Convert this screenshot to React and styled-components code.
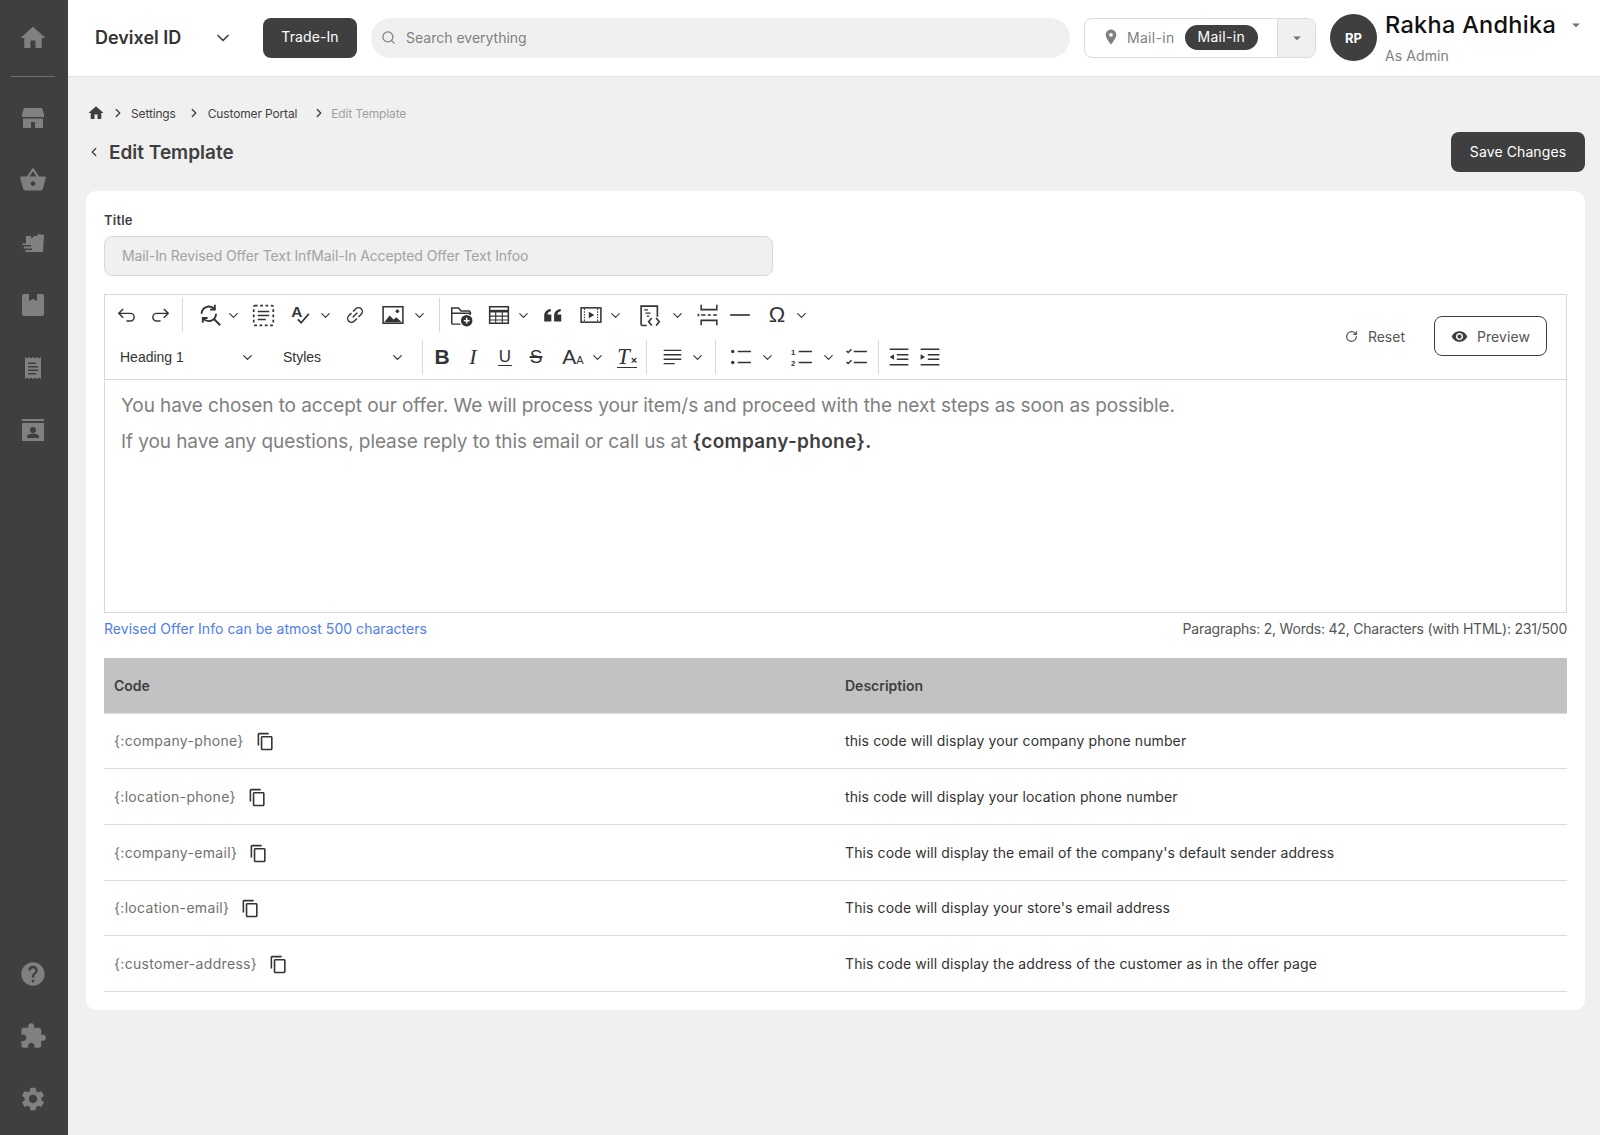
import React from 'react';
import styled, { createGlobalStyle } from 'styled-components';
import { ChevronDown, ChevronLeft, ChevronRight, RotateCw, Search } from 'lucide-react';
import {
  MdArrowDropDown,
  MdContentCopy,
  MdExtension,
  MdHelp,
  MdHome,
  MdPlace,
  MdSettings,
  MdShoppingBasket,
  MdVisibility,
} from 'react-icons/md';

const GlobalStyle = createGlobalStyle`
  html, body {
    margin: 0;
    padding: 0;
    background: #f0f0f0;
    font-family: Inter, "Noto Sans", sans-serif;
    color: #3f3f3f;
  }
  * { box-sizing: border-box; }
`;

const Page = styled.div`
  display: flex;
  width: 1600px;
  height: 1135px;
  overflow: hidden;
`;

const Sidebar = styled.aside`
  width: 68px;
  flex-shrink: 0;
  background: #3f3f3f;
  display: flex;
  flex-direction: column;
  padding: 7px 2px 5px 0;
  color: #808080;
`;

const SideSlot = styled.div`
  height: 62.5px;
  display: flex;
  align-items: center;
  justify-content: center;
`;

const SideDivider = styled.hr`
  width: 44px;
  height: 1px;
  border: 0;
  margin: 6px auto 10px;
  background: #707070;
`;

const SideBottom = styled.div`
  margin-top: auto;
`;

const Main = styled.div`
  flex: 1;
  min-width: 0;
  display: flex;
  flex-direction: column;
`;

const TopBar = styled.header`
  height: 77px;
  background: #fff;
  border-bottom: 1px solid #e2e2e2;
  display: flex;
  align-items: center;
  padding: 0 15px 1px 27px;
`;

const Brand = styled.div`
  width: 118px;
  font-size: 18px;
  font-weight: 600;
  color: #333;
`;

const BrandChevron = styled(ChevronDown)`
  width: 20px;
  height: 20px;
  margin-right: 30px;
  color: #3f3f3f;
`;

const DarkButton = styled.button`
  width: ${(p) => p.$w}px;
  height: 40px;
  padding: 0 0 2px;
  background: #3f3f3f;
  color: #fff;
  border: 0;
  border-radius: 8px;
  font: 400 14px Inter, sans-serif;
  letter-spacing: 0.1px;
`;

const SearchBox = styled.div`
  width: 699px;
  height: 40px;
  margin: 0 14px;
  padding: 0 10px 1px;
  border-radius: 20px;
  background: #f0f0f0;
  display: flex;
  align-items: center;
  gap: 10px;
  color: #808080;
  font-size: 14px;
`;

const ModeBox = styled.div`
  width: 232px;
  height: 40px;
  border: 1px solid #dcdcdc;
  border-radius: 8px;
  display: flex;
  align-items: center;
  overflow: hidden;
`;

const ModeMain = styled.div`
  flex: 1;
  height: 100%;
  padding: 0 0 1px 17px;
  display: flex;
  align-items: center;
  gap: 7px;
  font-size: 14px;
  letter-spacing: 0.3px;
  color: #808080;
`;

const ModePill = styled.span`
  height: 25px;
  padding: 0 13px 1px;
  margin-left: 3px;
  border-radius: 13px;
  background: #3f3f3f;
  color: #fff;
  display: flex;
  align-items: center;
`;

const ModeCaret = styled.div`
  width: 38px;
  height: 100%;
  background: #f0f0f0;
  border-left: 1px solid #dcdcdc;
  display: flex;
  align-items: center;
  justify-content: center;
  color: #707070;
`;

const Avatar = styled.div`
  width: 47px;
  height: 47px;
  margin-left: 14px;
  border-radius: 50%;
  background: #3f3f3f;
  color: #fff;
  font-size: 13px;
  font-weight: 700;
  display: flex;
  align-items: center;
  justify-content: center;
`;

const UserBlock = styled.div`
  margin-left: 8px;
  flex: 1;
  display: flex;
  flex-direction: column;
  gap: 9px;
  padding-top: 2px;
`;

const UserName = styled.div`
  display: flex;
  align-items: center;
  justify-content: space-between;
  font-size: 23.5px;
  line-height: 26px;
  font-weight: 500;
  color: #111;
  letter-spacing: 0.3px;
`;

const UserRole = styled.div`
  font-size: 14px;
  line-height: 18px;
  color: #808080;
  letter-spacing: 0.1px;
`;

const Content = styled.main`
  padding: 27px 15px 0 18px;
`;

const Crumbs = styled.nav`
  display: flex;
  align-items: center;
  height: 18px;
  padding-left: 1px;
  font-size: 12px;
  letter-spacing: -0.15px;
  color: #3f3f3f;
`;

const Crumb = styled.span`
  color: ${(p) => (p.$muted ? '#a0a0a0' : '#3f3f3f')};
`;

const CrumbArrow = styled(ChevronRight)`
  width: 14px;
  height: 14px;
  margin: 0 ${(p) => p.$r}px 0 ${(p) => p.$l}px;
  stroke-width: 2.2;
`;

const HeadRow = styled.div`
  display: flex;
  align-items: center;
  justify-content: space-between;
  height: 40px;
  margin-top: 10px;
`;

const PageTitle = styled.h1`
  display: flex;
  align-items: center;
  gap: 8px;
  margin: 0;
  font-size: 19px;
  font-weight: 600;
  color: #3f3f3f;
`;

const BackChevron = styled(ChevronLeft)`
  width: 14px;
  height: 14px;
  margin-left: 1px;
  stroke-width: 2.2;
`;

const Card = styled.section`
  margin-top: 19px;
  height: 819px;
  padding: 19px 18px;
  background: #fff;
  border-radius: 10px;
`;

const FieldLabel = styled.label`
  display: block;
  height: 19px;
  margin-top: 1px;
  font-size: 13px;
  line-height: 19px;
  font-weight: 600;
  letter-spacing: 0.2px;
  color: #3f3f3f;
`;

const TitleInput = styled.div`
  width: 669px;
  height: 40px;
  margin-top: 6px;
  padding: 0 17px 2px;
  border: 1px solid #d8d8d8;
  border-radius: 8px;
  background: #f0f0f0;
  display: flex;
  align-items: center;
  font-size: 14px;
  letter-spacing: -0.11px;
  color: #a2a2a2;
`;

const Editor = styled.div`
  height: 319px;
  margin-top: 18px;
  border: 1px solid #d8d8d8;
  display: flex;
  flex-direction: column;
`;

const Toolbar = styled.div`
  height: 85px;
  flex-shrink: 0;
  border-bottom: 1px solid #d8d8d8;
  display: flex;
  align-items: center;
  justify-content: space-between;
  padding: 0 19px 2px 0;
`;

const ToolRows = styled.div`
  display: flex;
  flex-direction: column;
  gap: 8px;
`;

const ToolRow = styled.div`
  display: flex;
  align-items: center;
  height: 34px;
  padding-left: 14px;
`;

// 16px slot, the icon may hang over its edges; $gap is the space before it
const ToolSlot = styled.span`
  width: 16px;
  height: 34px;
  flex-shrink: 0;
  margin-left: ${(p) => p.$gap || 0}px;
  display: flex;
  align-items: center;
  justify-content: center;
  color: #333;
  svg { flex-shrink: 0; overflow: visible; }
`;

const ToolDivider = styled.i`
  width: 1px;
  height: 34px;
  background: #d8d8d8;
`;

const ToolSelect = styled.div`
  width: ${(p) => p.$w}px;
  height: 34px;
  padding-left: ${(p) => p.$pl}px;
  padding-right: ${(p) => p.$pr}px;
  display: flex;
  align-items: center;
  justify-content: space-between;
  font: 400 14px "Liberation Sans", Arial, sans-serif;
  color: #333;
`;

const GlyphBold = styled.span`
  font: 700 21px "Liberation Sans", Arial, sans-serif;
`;

const GlyphItalic = styled.span`
  font: italic 400 22px "Liberation Serif", serif;
`;

const GlyphUnder = styled.span`
  font: 400 17px "Liberation Sans", Arial, sans-serif;
  padding: 0 1px;
  border-bottom: 1.5px solid #333;
  line-height: 17px;
`;

const GlyphStrike = styled.span`
  font: 400 19px "Liberation Sans", Arial, sans-serif;
  text-decoration: line-through;
  text-decoration-thickness: 1.5px;
`;

const GlyphSize = styled.span`
  font: 400 21px "Liberation Sans", Arial, sans-serif;
  white-space: nowrap;
  small { font-size: 11px; }
`;

const GlyphClear = styled.span`
  font: italic 400 23px "Liberation Serif", serif;
  white-space: nowrap;
  border-bottom: 1.5px solid #333;
  line-height: 20px;
  small {
    font: 700 11px "Liberation Sans", sans-serif;
    margin-left: 1px;
  }
`;

const GlyphOmega = styled.span`
  font: 400 22px "Liberation Sans", Arial, sans-serif;
`;

const ToolActions = styled.div`
  display: flex;
  align-items: center;
  gap: 29px;
`;

const ResetLink = styled.span`
  display: flex;
  align-items: center;
  gap: 10px;
  font-size: 14px;
  color: #555;
`;

const PreviewButton = styled.button`
  width: 113px;
  height: 40px;
  background: #fff;
  border: 1px solid #3f3f3f;
  border-radius: 8px;
  display: flex;
  align-items: center;
  justify-content: center;
  gap: 9px;
  font: 400 14px Inter, sans-serif;
  letter-spacing: 0.1px;
  color: #555;
`;

const EditorBody = styled.div`
  padding: 8px 16px;
  font-size: 19px;
  line-height: 36px;
  letter-spacing: -0.08px;
  color: #808080;
  p { margin: 0; }
  strong {
    color: #3f3f3f;
    font-weight: 600;
    letter-spacing: 0.3px;
  }
`;

const EditorFoot = styled.div`
  display: flex;
  justify-content: space-between;
  align-items: center;
  height: 30px;
  font-size: 14px;
  letter-spacing: -0.22px;
  color: #555;
`;

const Hint = styled.span`
  color: #4f7df0;
  letter-spacing: 0.04px;
`;

const CodeTable = styled.table`
  width: 100%;
  margin-top: 15px;
  border-collapse: collapse;
  table-layout: fixed;
  font-size: 14px;
`;

const HeadCell = styled.th`
  height: 55px;
  width: ${(p) => p.$w || 'auto'};
  padding: 0 10px;
  background: #c2c2c2;
  border-bottom: 1px solid #dcdcdc;
  text-align: left;
  font-weight: 600;
  color: #3f3f3f;
`;

const Cell = styled.td`
  height: 55.7px;
  padding: 0 10px;
  border-bottom: 1px solid #dcdcdc;
  color: #333;
  letter-spacing: 0.11px;
`;

const CodeCell = styled(Cell)`
  padding-top: 2px;
  color: #707070;
  letter-spacing: 0.32px;
`;

const CopyIcon = styled(MdContentCopy)`
  width: 19px;
  height: 19px;
  margin-left: 12px;
  color: #333;
  vertical-align: -5px;
`;

// toolbar drawings on a 20x20 grid
const Draw = ({ children, size = 22, sw = 1.3 }) => (
  <svg width={size} height={size} viewBox="0 0 20 20" fill="none" stroke="currentColor" strokeWidth={sw}>
    {children}
  </svg>
);

const Undo = () => (
  <Draw><path d="M6.500 4.500 2.500 8.500l4 4M2.500 8.500H13a3.500 3.500 0 0 1 0 7H9.500" /></Draw>
);
const Redo = () => (
  <Draw><path d="m13.500 4.500 4 4-4 4M17.500 8.500H7a3.500 3.500 0 0 0 0 7h3.500" /></Draw>
);
const FindReplace = () => (
  <Draw size={24} sw={1.6}>
    <path d="M3 9a6 6 0 0 1 10.500-4M15 9a6 6 0 0 1-10.500 4" />
    <path d="M14 1.500V5.500h-4M4 16.500V12.500h4M13.500 13.500l5 5" />
  </Draw>
);
const SelectAll = () => (
  <Draw size={23}>
    <rect x="1.500" y="1.500" width="17" height="17" rx="1" strokeDasharray="2.400 2.200" strokeWidth="1.500" />
    <path d="M5 6.500h10M5 10h10M5 13.500h7" />
  </Draw>
);
const Spell = () => (
  <Draw>
    <path d="m8 14 3 3 7-8" strokeWidth="1.500" />
    <text x="2" y="12" fontSize="14" fontWeight="700" fontFamily="Liberation Sans" fill="currentColor" stroke="none">A</text>
  </Draw>
);
const LinkIcon = () => (
  <Draw>
    <g transform="rotate(-45 10 10)">
      <path d="M9 6.500H5.500a3.500 3.500 0 0 0 0 7H9M11 6.500h3.500a3.500 3.500 0 0 1 0 7H11M7 10h6" />
    </g>
  </Draw>
);
const ImageIcon = () => (
  <Draw>
    <rect x="1" y="2.500" width="18" height="15" strokeWidth="1.400" />
    <path d="m2 16.500 5-6 3.500 3.500 2.500-2 5 4.500z" fill="currentColor" stroke="none" />
    <circle cx="14" cy="6.500" r="1.600" fill="currentColor" stroke="none" />
  </Draw>
);
const FolderAdd = () => (
  <Draw size={23}>
    <path d="M9 17.500H2.500a1 1 0 0 1-1-1V3.500h6l2 2.500h7a1 1 0 0 1 1 1v2.500M1.500 8h17" />
    <circle cx="14.500" cy="14.500" r="5" fill="currentColor" stroke="none" />
    <path d="M14.500 12v5M12 14.500h5" stroke="#fff" strokeWidth="1.300" />
  </Draw>
);
const TableIcon = () => (
  <Draw>
    <rect x="1.500" y="2.500" width="17" height="15" strokeWidth="1.400" />
    <path d="M1.500 6.500h17" strokeWidth="2.400" />
    <path d="M1.500 11h17M1.500 14.500h17M7 6v11.500M13 6v11.500" strokeWidth="1" />
  </Draw>
);
const QuoteIcon = () => (
  <Draw>
    <path
      d="M2 16V10.500C2 7.500 4 5 8 4.500v2c-2 .5-3 1.500-3 3h3.500V16zM11 16V10.500c0-3 2-5.500 6-6v2c-2 .5-3 1.500-3 3h3.500V16z"
      fill="currentColor"
      stroke="none"
    />
  </Draw>
);
const MediaIcon = () => (
  <Draw>
    <rect x="1" y="3.500" width="18" height="13" strokeWidth="1.400" />
    <path d="M4 4v12M16 4v12" strokeWidth="1" strokeDasharray="1.500 1" />
    <path d="m8 7 5 3-5 3z" fill="currentColor" stroke="none" />
  </Draw>
);
const SnippetIcon = () => (
  <Draw size={25}>
    <path d="M7 18H3.500a1 1 0 0 1-1-1V2.500h13V11" />
    <path d="M5 5.500h3M6 8h4M7 10.500h2" strokeWidth="1" />
    <path d="m11 12-2.500 3 2.500 3M14.500 12l2.500 3-2.500 3" />
  </Draw>
);
const PageBreak = () => (
  <Draw size={24}>
    <path d="M3.500 1.500v4h13v-4M3.500 18.500v-4h13v4" />
    <path d="M3.500 10h3.500M9 10h2.500M13.500 10h3" />
    <path d="M.5 8.500 2.500 10l-2 1.500z" fill="currentColor" stroke="none" />
  </Draw>
);
const HrIcon = () => (
  <Draw><path d="M1 10h18" strokeWidth="1.500" /></Draw>
);
const AlignIcon = () => (
  <Draw><path d="M1.500 4h16M1.500 8h16M1.500 12h16M1.500 16h10" /></Draw>
);
const BulletList = () => (
  <Draw>
    <circle cx="2.500" cy="5" r="1.500" fill="currentColor" stroke="none" />
    <circle cx="2.500" cy="15" r="1.500" fill="currentColor" stroke="none" />
    <path d="M7 5h12M7 15h12" />
  </Draw>
);
const NumberList = () => (
  <Draw>
    <text x="0" y="8" fontSize="7" fontWeight="700" fontFamily="Liberation Sans" fill="currentColor" stroke="none">1</text>
    <text x="0" y="18.500" fontSize="7" fontWeight="700" fontFamily="Liberation Sans" fill="currentColor" stroke="none">2</text>
    <path d="M7 5h12M7 15h12" />
  </Draw>
);
const TodoList = () => (
  <Draw>
    <path d="m.5 4.500 1.500 1.500 3-3M.5 14.500l1.500 1.500 3-3" />
    <path d="M7 5h12M7 15h12" />
  </Draw>
);
const Outdent = () => (
  <Draw>
    <path d="M1.500 3h17M8 8h10.500M8 12h10.500M1.500 17h17" />
    <path d="M5.500 7.500v5L1.500 10z" fill="currentColor" stroke="none" />
  </Draw>
);
const Indent = () => (
  <Draw>
    <path d="M1.500 3h17M8 8h10.500M8 12h10.500M1.500 17h17" />
    <path d="M1.500 7.500v5l4-2.500z" fill="currentColor" stroke="none" />
  </Draw>
);

const Chev = () => <ChevronDown size={15} strokeWidth={1.8} />;

const topTools = [
  [<Undo />, 0],
  [<Redo />, 17],
  [<ToolDivider />, 6.5],
  [<FindReplace />, 11.5],
  [<Chev />, 7],
  [<SelectAll />, 14],
  [<Spell />, 21],
  [<Chev />, 9],
  [<LinkIcon />, 14],
  [<ImageIcon />, 22],
  [<Chev />, 10],
  [<ToolDivider />, 4.5],
  [<FolderAdd />, 5.5],
  [<TableIcon />, 22],
  [<Chev />, 8],
  [<QuoteIcon />, 14],
  [<MediaIcon />, 22],
  [<Chev />, 8],
  [<SnippetIcon />, 19],
  [<Chev />, 11],
  [<PageBreak />, 16],
  [<HrIcon />, 15],
  [<GlyphOmega>Ω</GlyphOmega>, 21],
  [<Chev />, 8],
];

const formatTools = [
  [<ToolDivider />, 3],
  [<GlyphBold>B</GlyphBold>, 4],
  [<GlyphItalic>I</GlyphItalic>, 15],
  [<GlyphUnder>U</GlyphUnder>, 16],
  [<GlyphStrike>S</GlyphStrike>, 15],
  [<GlyphSize>A<small>A</small></GlyphSize>, 21],
  [<Chev />, 8],
  [<GlyphClear>T<small>×</small></GlyphClear>, 14],
  [<ToolDivider />, 3],
  [<AlignIcon />, 11],
  [<Chev />, 8],
  [<ToolDivider />, 2],
  [<BulletList />, 10],
  [<Chev />, 10],
  [<NumberList />, 19],
  [<Chev />, 10],
  [<TodoList />, 13],
  [<ToolDivider />, 5],
  [<Outdent />, 5],
  [<Indent />, 15],
];

const codes = [
  ['{:company-phone}', 'this code will display your company phone number'],
  ['{:location-phone}', 'this code will display your location phone number'],
  ['{:company-email}', "This code will display the email of the company's default sender address"],
  ['{:location-email}', "This code will display your store's email address"],
  ['{:customer-address}', 'This code will display the address of the customer as in the offer page'],
];

const StoreIcon = () => (
  <svg width="24" height="24" viewBox="0 0 24 24" fill="currentColor">
    <path fillRule="evenodd" d="M3 2h18l2 6v3H1V8zM2 12.500h20V22H14v-6h-4v6H2z" />
  </svg>
);
const ShippingIcon = () => (
  <svg width="24" height="24" viewBox="0 0 24 24" fill="currentColor">
    <path d="M5 5h5l.5 3L13 5h3l1-2 6 1-1 17H4l1-2h6v-1.500H2.500l.5-2h7V14H1l.5-1.500H5z" />
  </svg>
);
const BoxIcon = () => (
  <svg width="24" height="24" viewBox="0 0 24 24" fill="currentColor">
    <path d="M1 3a2 2 0 0 1 2-2h5v7l4-2 4 2V1h5a2 2 0 0 1 2 2v18a2 2 0 0 1-2 2H3a2 2 0 0 1-2-2z" />
  </svg>
);
const ReceiptIcon = () => (
  <svg width="24" height="24" viewBox="0 0 24 24" fill="currentColor">
    <path
      fillRule="evenodd"
      d="M4 1l2 1.500L8 1l2 1.500L12 1l2 1.500L16 1l2 1.500L20 1v22l-2-1.500-2 1.500-2-1.500-2 1.500-2-1.500L8 23l-2-1.500L4 23zM7 6.500v1.500h8V6.500zM7 10v1.500h10V10zM7 13.500V15h10v-1.500zM7 17v1.500h8V17z"
    />
  </svg>
);
const ContactIcon = () => (
  <svg width="24" height="24" viewBox="0 0 24 24" fill="currentColor">
    <path
      fillRule="evenodd"
      d="M1 1h22v2H1zM1 5h22v18H1zM12 9a3 3 0 1 0 0 6 3 3 0 0 0 0-6zM6 20h12v-1.500c0-2-4-3-6-3s-6 1-6 3z"
    />
  </svg>
);

const App = () => {
  return (
    <Page>
      <GlobalStyle />
      <Sidebar>
        <SideSlot><MdHome size={30} /></SideSlot>
        <SideDivider />
        <SideSlot><StoreIcon /></SideSlot>
        <SideSlot><MdShoppingBasket size={28} /></SideSlot>
        <SideSlot><ShippingIcon /></SideSlot>
        <SideSlot><BoxIcon /></SideSlot>
        <SideSlot><ReceiptIcon /></SideSlot>
        <SideSlot><ContactIcon /></SideSlot>
        <SideBottom>
          <SideSlot><MdHelp size={28} /></SideSlot>
          <SideSlot><MdExtension size={28} /></SideSlot>
          <SideSlot><MdSettings size={28} /></SideSlot>
        </SideBottom>
      </Sidebar>
      <Main>
        <TopBar>
          <Brand>Devixel ID</Brand>
          <BrandChevron />
          <DarkButton $w={94}>Trade-In</DarkButton>
          <SearchBox>
            <Search size={15} />
            Search everything
          </SearchBox>
          <ModeBox>
            <ModeMain>
              <MdPlace size={18} />
              Mail-in
              <ModePill>Mail-in</ModePill>
            </ModeMain>
            <ModeCaret><MdArrowDropDown size={18} /></ModeCaret>
          </ModeBox>
          <Avatar>RP</Avatar>
          <UserBlock>
            <UserName>
              Rakha Andhika
              <MdArrowDropDown size={18} color="#707070" />
            </UserName>
            <UserRole>As Admin</UserRole>
          </UserBlock>
        </TopBar>
        <Content>
          <Crumbs>
            <MdHome size={18} />
            <CrumbArrow $l={6} $r={6} />
            <Crumb>Settings</Crumb>
            <CrumbArrow $l={11} $r={7} />
            <Crumb>Customer Portal</Crumb>
            <CrumbArrow $l={15} $r={5} />
            <Crumb $muted>Edit Template</Crumb>
          </Crumbs>
          <HeadRow>
            <PageTitle>
              <BackChevron />
              Edit Template
            </PageTitle>
            <DarkButton $w={134}>Save Changes</DarkButton>
          </HeadRow>
          <Card>
            <FieldLabel>Title</FieldLabel>
            <TitleInput>Mail-In Revised Offer Text InfMail-In Accepted Offer Text Infoo</TitleInput>
            <Editor>
              <Toolbar>
                <ToolRows>
                  <ToolRow>
                    {topTools.map(([icon, gap], i) => (
                      <ToolSlot key={i} $gap={gap}>{icon}</ToolSlot>
                    ))}
                  </ToolRow>
                  <ToolRow>
                    <ToolSelect $w={156} $pl={1} $pr={20}>Heading 1<ChevronDown size={15} /></ToolSelect>
                    <ToolSelect $w={136} $pl={8} $pr={6.5}>Styles<ChevronDown size={15} /></ToolSelect>
                    {formatTools.map(([icon, gap], i) => (
                      <ToolSlot key={i} $gap={gap}>{icon}</ToolSlot>
                    ))}
                  </ToolRow>
                </ToolRows>
                <ToolActions>
                  <ResetLink><RotateCw size={13} strokeWidth={2.2} />Reset</ResetLink>
                  <PreviewButton><MdVisibility size={17} color="#3f3f3f" />Preview</PreviewButton>
                </ToolActions>
              </Toolbar>
              <EditorBody>
                <p>You have chosen to accept our offer. We will process your item/s and proceed with the next steps as soon as possible.</p>
                <p>If you have any questions, please reply to this email or call us at <strong>{'{company-phone}.'}</strong></p>
              </EditorBody>
            </Editor>
            <EditorFoot>
              <Hint>Revised Offer Info can be atmost 500 characters</Hint>
              <span>Paragraphs: 2, Words: 42, Characters (with HTML): 231/500</span>
            </EditorFoot>
            <CodeTable>
              <thead>
                <tr>
                  <HeadCell $w="731px">Code</HeadCell>
                  <HeadCell>Description</HeadCell>
                </tr>
              </thead>
              <tbody>
                {codes.map(([code, text]) => (
                  <tr key={code}>
                    <CodeCell>{code}<CopyIcon /></CodeCell>
                    <Cell>{text}</Cell>
                  </tr>
                ))}
              </tbody>
            </CodeTable>
          </Card>
        </Content>
      </Main>
    </Page>
  );
};

export default App;
